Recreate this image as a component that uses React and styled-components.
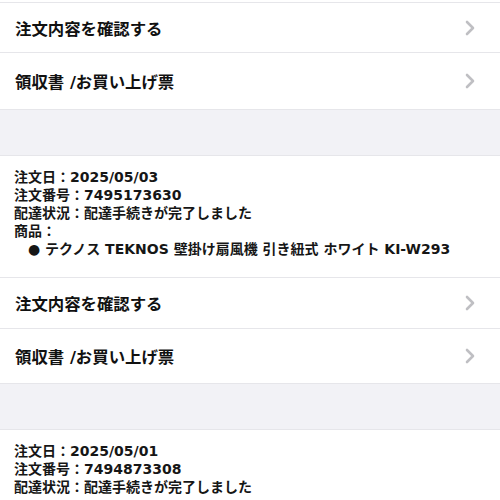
import React from "react";
import styled, { createGlobalStyle } from "styled-components";

const Global = createGlobalStyle`
  html, body { margin: 0; padding: 0; background: #ffffff; }
  body { font-family: "DejaVu Sans", "Noto Sans CJK JP", sans-serif; color: #111; }
`;

const Page = styled.div`
  display: flex;
  flex-direction: column;
  padding-top: 2px;
  background: #fff;
`;

const Section = styled.div`
  display: flex;
  flex-direction: column;
  background: #fff;
  border-top: 1px solid #e6e6ea;
`;

const Row = styled.div`
  display: flex;
  align-items: center;
  justify-content: space-between;
  height: ${(p) => p.$h}px;
  padding: 0 25px 0 15px;
  border-bottom: 1px solid #e6e6ea;
  box-sizing: border-box;
`;

const Label = styled.span`
  font-family: "DejaVu Sans", "Noto Sans CJK JP", sans-serif;
  font-size: 16.4px;
  font-weight: 700;
  color: #111;
`;

const Gap = styled.div`
  height: 45px;
  background: #f2f2f6;
`;

const Info = styled.div`
  display: flex;
  flex-direction: column;
  padding: 12px 14px 19px 14px;
  border-bottom: 1px solid #e6e6ea;
  font-size: 14px;
  line-height: 18px;
  font-weight: 600;
  color: #161616;
`;

const Line = styled.div`
  white-space: nowrap;
  padding-left: ${(p) => (p.$indent ? 14 : 0)}px;
`;

const Chevron = () => (
  <svg width="10" height="16" viewBox="0 0 10 16">
    <polyline
      points="2,2 8,8 2,14"
      fill="none"
      stroke="#bfbfc3"
      strokeWidth="2.6"
      strokeLinecap="round"
      strokeLinejoin="round"
    />
  </svg>
);

const ActionRows = ({ first }) => (
  <>
    <Row $h={first ? 50 : 51}>
      <Label>注文内容を確認する</Label>
      <Chevron />
    </Row>
    <Row $h={first ? 57 : 55}>
      <Label>領収書 /お買い上げ票</Label>
      <Chevron />
    </Row>
  </>
);

export default function App() {
  return (
    <>
      <Global />
      <Page>
        <Section>
          <ActionRows first />
        </Section>
        <Gap />
        <Section>
          <Info>
            <Line>注文日：2025/05/03</Line>
            <Line>注文番号：7495173630</Line>
            <Line>配達状況：配達手続きが完了しました</Line>
            <Line>商品：</Line>
            <Line $indent>● テクノス TEKNOS 壁掛け扇風機 引き紐式 ホワイト KI-W293</Line>
          </Info>
          <ActionRows />
        </Section>
        <Gap />
        <Section>
          <Info>
            <Line>注文日：2025/05/01</Line>
            <Line>注文番号：7494873308</Line>
            <Line>配達状況：配達手続きが完了しました</Line>
          </Info>
        </Section>
      </Page>
    </>
  );
}
